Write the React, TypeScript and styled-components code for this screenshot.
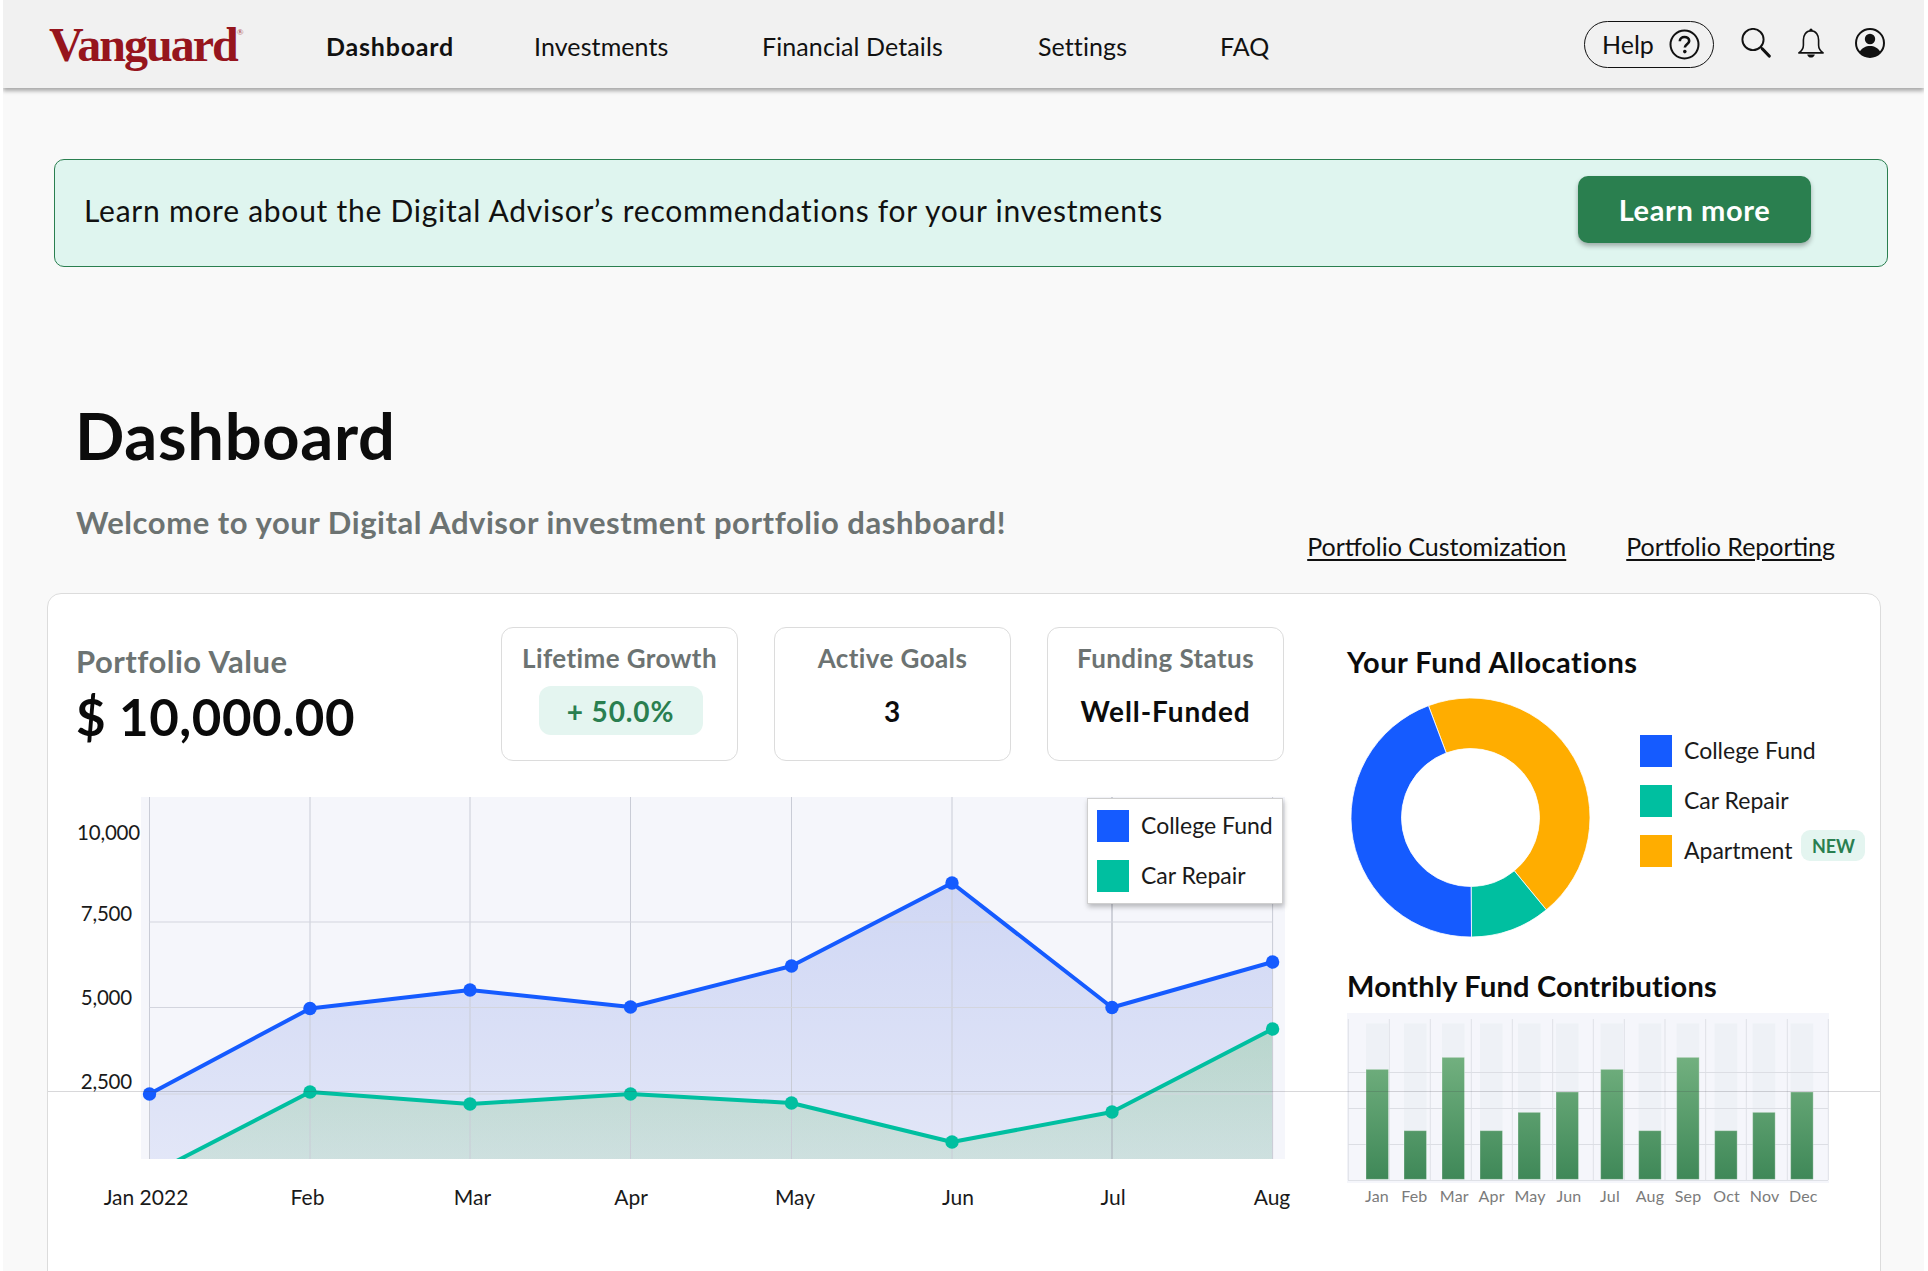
import React from 'react';
import styled, { createGlobalStyle } from 'styled-components';

const GlobalStyle = createGlobalStyle`
  html, body {
    margin: 0;
    background: #ffffff;
    font-family: Lato, "Open Sans", sans-serif;
    color: #111;
    overflow: hidden;
  }
  svg text {
    font-family: Lato, "Open Sans", sans-serif;
  }
`;

const Page = styled.div`
  margin: 0 4px 0 3px;
  height: 1271px;
  background: #f9f9f9;
  overflow: hidden;
`;

const Header = styled.header`
  display: flex;
  align-items: center;
  height: 88px;
  background: #f1f1f1;
  box-shadow: 0 3px 4px rgba(0, 0, 0, 0.32);
  padding: 0 39px 0 46px;
`;

const Logo = styled.div`
  width: 278px;
  font-family: "Liberation Serif", serif;
  font-weight: 700;
  font-size: 48px;
  line-height: 48px;
  letter-spacing: -2px;
  color: #96151d;
  margin-top: 1px;

  sup {
    font-size: 9px;
    letter-spacing: 0;
    vertical-align: 26px;
    line-height: 0;
    color: #b9666b;
  }
`;

const Nav = styled.nav`
  display: grid;
  grid-template-columns: 207px 228px 276px 182px auto;
  align-items: center;
  margin-top: 4px;
`;

const NavItem = styled.a<{ $active?: boolean }>`
  margin-left: ${(p) => (p.$active ? '-1px' : '0')};
  font-size: 25px;
  font-weight: ${(p) => (p.$active ? 700 : 400)};
  letter-spacing: ${(p) => (p.$active ? '0.8px' : '0.1px')};
  color: #111;
  text-decoration: none;
`;

const Actions = styled.div`
  display: flex;
  align-items: center;
  margin-left: auto;
`;

const HelpPill = styled.div`
  display: flex;
  align-items: center;
  justify-content: space-between;
  box-sizing: border-box;
  width: 130px;
  height: 47px;
  margin-top: 1px;
  padding: 0 13px 0 17px;
  border: 1px solid #111;
  border-radius: 24px;
  font-size: 25px;
`;

const HelpLabel = styled.span`
  margin-top: -2px;
`;

const IconSlot = styled.span<{ $gap: number }>`
  display: flex;
  margin-left: ${(p) => p.$gap}px;
  margin-top: -2px;
`;

const Banner = styled.section`
  display: flex;
  align-items: center;
  justify-content: space-between;
  box-sizing: border-box;
  height: 108px;
  margin: 71px 36px 0 51px;
  padding: 0 76px 0 29px;
  background: #dff5ef;
  border: 1px solid #2a7f50;
  border-radius: 10px;
`;

const BannerText = styled.span`
  margin-top: -7px;
  font-size: 30px;
  letter-spacing: 0.75px;
`;

const LearnButton = styled.button`
  width: 233px;
  height: 67px;
  margin-top: -7px;
  border: 0;
  border-radius: 10px;
  background: #2a7f4f;
  box-shadow: 0 3px 5px rgba(0, 0, 0, 0.3);
  color: #fff;
  font-family: inherit;
  font-size: 29px;
  font-weight: 700;
  letter-spacing: 0.6px;
`;

const Hero = styled.section`
  padding: 0 89px 0 73px;
`;

const Title = styled.h1`
  margin: 130px 0 0 -1px;
  font-size: 65px;
  line-height: 76px;
  font-weight: 700;
  letter-spacing: 0.7px;
  color: #0c0c0c;
`;

const SubRow = styled.div`
  display: flex;
  align-items: flex-start;
  justify-content: space-between;
  height: 60px;
  margin-top: 29px;
`;

const Welcome = styled.p`
  margin: 0;
  font-size: 31px;
  line-height: 40px;
  font-weight: 700;
  letter-spacing: 0.55px;
  color: #6c7372;
`;

const Links = styled.div`
  display: flex;
  gap: 60px;
  margin-top: 28px;
`;

const PageLink = styled.a`
  font-size: 25px;
  line-height: 32px;
  color: #111;
  text-decoration: underline;
  text-underline-offset: 3px;
`;

const Card = styled.section`
  position: relative;
  display: flex;
  box-sizing: border-box;
  height: 760px;
  margin: 31px 43px 0 44px;
  padding: 0 0 0 28px;
  background: #fff;
  border: 1px solid #dcdcdc;
  border-radius: 14px;
`;

const StrayRule = styled.div`
  position: absolute;
  left: 0;
  right: 0;
  top: 497px;
  height: 1px;
  background: rgba(60, 60, 70, 0.2);
  z-index: 3;
  pointer-events: none;
`;

const MainColumn = styled.div`
  flex: 0 0 1271px;
  padding-top: 33px;
`;

const TopRow = styled.div`
  display: flex;
  gap: 36px;
`;

const PortfolioBlock = styled.div`
  width: 389px;
  padding-top: 14px;
`;

const PortfolioLabel = styled.div`
  font-size: 31px;
  line-height: 40px;
  font-weight: 700;
  letter-spacing: 0.48px;
  color: #6c7372;
`;

const PortfolioValue = styled.div`
  margin-top: 6px;
  font-size: 51px;
  line-height: 60px;
  font-weight: 700;
  letter-spacing: 0.55px;
  color: #0a0a0a;
`;

const StatCard = styled.div`
  display: flex;
  flex-direction: column;
  align-items: center;
  box-sizing: border-box;
  width: 237px;
  height: 134px;
  padding-top: 14px;
  border: 1px solid #dcdcdc;
  border-radius: 12px;
`;

const StatLabel = styled.div`
  font-size: 26px;
  line-height: 32px;
  font-weight: 700;
  letter-spacing: 0.4px;
  color: #6c7372;
`;

const StatValue = styled.div<{ $pill?: boolean }>`
  display: flex;
  align-items: center;
  justify-content: center;
  box-sizing: border-box;
  width: ${(p) => (p.$pill ? '164px' : 'auto')};
  height: 49px;
  margin-top: 12px;
  margin-left: ${(p) => (p.$pill ? '2px' : '0')};
  border-radius: 12px;
  background: ${(p) => (p.$pill ? '#e4f5f0' : 'transparent')};
  color: ${(p) => (p.$pill ? '#2a7f50' : '#0c0c0c')};
  font-size: 28px;
  font-weight: 700;
  letter-spacing: 0.9px;
`;

const ChartArea = styled.div`
  position: relative;
  width: 1230px;
  height: 450px;
  margin-top: 19px;

  svg {
    display: block;
  }
`;

const ChartLegend = styled.div`
  position: absolute;
  left: 1011px;
  top: 18px;
  display: flex;
  flex-direction: column;
  gap: 18px;
  box-sizing: border-box;
  width: 196px;
  height: 106px;
  padding: 11px 0 0 9px;
  background: #fff;
  border: 1px solid #cfcfcf;
  box-shadow: 1px 3px 5px rgba(0, 0, 0, 0.25);
`;

const LegendRow = styled.div`
  display: flex;
  align-items: center;
  gap: 12px;
`;

const Swatch = styled.span<{ $color: string }>`
  flex: none;
  width: 32px;
  height: 32px;
  background: ${(p) => p.$color};
`;

const LegendText = styled.span`
  margin-top: -2px;
  font-size: 23px;
  line-height: 32px;
  color: #1a1a1a;
`;

const SideColumn = styled.aside`
  padding-top: 50px;
`;

const SideHeading = styled.h2`
  margin: 0;
  font-size: 29px;
  line-height: 36px;
  font-weight: 700;
  letter-spacing: 0.5px;
  color: #0c0c0c;
`;

const DonutRow = styled.div`
  display: flex;
  align-items: flex-start;
  margin: 18px 0 0 4px;
`;

const DonutSvg = styled.svg`
  flex: none;
`;

const DonutLegend = styled.div`
  display: flex;
  flex-direction: column;
  gap: 18px;
  margin: 37px 0 0 50px;
`;

const NewTag = styled.span`
  display: flex;
  align-items: center;
  justify-content: center;
  align-self: flex-start;
  width: 64px;
  height: 31px;
  margin: -5px 0 0 -3px;
  border-radius: 9px;
  background: #e4f5f0;
  color: #2a7f50;
  font-size: 18px;
  font-weight: 700;
`;

const BarHeading = styled(SideHeading)`
  margin-top: 31px;
  letter-spacing: 0.2px;
`;

const BarChart = styled.div`
  width: 482px;
  height: 200px;
  margin-top: 9px;

  svg {
    display: block;
  }
`;

const BLUE = '#155bff';
const TEAL = '#00bfa0';
const AMBER = '#ffad00';

const MONTH_X = [149.5, 310, 470, 630.5, 791.5, 952, 1112, 1272.6];
const BLUE_Y = [1094, 1008.5, 990, 1007, 966, 883, 1007.5, 962];
const TEAL_Y = [1175, 1092, 1104, 1094, 1103, 1142, 1112, 1029];

const Y_LABELS = [
  { text: '10,000', x: 140, y: 832 },
  { text: '7,500', x: 132, y: 913 },
  { text: '5,000', x: 132, y: 997 },
  { text: '2,500', x: 132, y: 1081 },
];

const X_LABELS = [
  { text: 'Jan 2022', x: 146 },
  { text: 'Feb', x: 307.5 },
  { text: 'Mar', x: 472.5 },
  { text: 'Apr', x: 631 },
  { text: 'May', x: 795 },
  { text: 'Jun', x: 958 },
  { text: 'Jul', x: 1113 },
  { text: 'Aug', x: 1272 },
];

const toPoints = (ys: number[]) => MONTH_X.map((x, i) => `${x},${ys[i]}`).join(' ');
const toArea = (ys: number[]) => `${toPoints(ys)} 1272.6,1159 149.5,1159`;

const LineChart = () => (
  <svg width="1230" height="450" viewBox="76 780 1230 450">
    <defs>
      <linearGradient id="blueFill" gradientUnits="userSpaceOnUse" x1="0" y1="883" x2="0" y2="1159">
        <stop offset="0" stopColor="#3a5bd9" stopOpacity="0.2" />
        <stop offset="1" stopColor="#3a5bd9" stopOpacity="0.1" />
      </linearGradient>
      <linearGradient id="tealFill" gradientUnits="userSpaceOnUse" x1="0" y1="1029" x2="0" y2="1159">
        <stop offset="0" stopColor="#4fb84a" stopOpacity="0.24" />
        <stop offset="1" stopColor="#4fb84a" stopOpacity="0.14" />
      </linearGradient>
      <clipPath id="plotClip">
        <rect x="141" y="797" width="1144" height="362" />
      </clipPath>
    </defs>
    <rect x="141" y="797" width="1144" height="362" fill="#f5f6fb" />
    <g clipPath="url(#plotClip)">
      <polygon points={toArea(BLUE_Y)} fill="url(#blueFill)" />
      <polygon points={toArea(TEAL_Y)} fill="url(#tealFill)" />
      {MONTH_X.map((x, i) => (
        <line key={x} x1={x} x2={x} y1="797" y2="1159" stroke={i === 6 ? '#a9adb8' : '#c9ccd6'} strokeWidth="1" />
      ))}
      {[922, 1007.5, 1094].map((y) => (
        <line key={y} x1="149.5" x2="1272.6" y1={y} y2={y} stroke="#d3d5de" strokeWidth="1" />
      ))}
      <polyline points={toPoints(BLUE_Y)} fill="none" stroke={BLUE} strokeWidth="4" strokeLinejoin="round" />
      <polyline points={toPoints(TEAL_Y)} fill="none" stroke={TEAL} strokeWidth="4" strokeLinejoin="round" />
    </g>
    {MONTH_X.map((x, i) => (
      <circle key={x} cx={x} cy={BLUE_Y[i]} r="6.7" fill={BLUE} />
    ))}
    {MONTH_X.slice(1).map((x, i) => (
      <circle key={x} cx={x} cy={TEAL_Y[i + 1]} r="6.7" fill={TEAL} />
    ))}
    {Y_LABELS.map((l) => (
      <text key={l.text} x={l.x} y={l.y + 7.5} textAnchor="end" fontSize="20.5" letterSpacing="-0.2" fill="#1a1a1a">
        {l.text}
      </text>
    ))}
    {X_LABELS.map((l) => (
      <text key={l.text} x={l.x} y="1205" textAnchor="middle" fontSize="21" fill="#1a1a1a">
        {l.text}
      </text>
    ))}
  </svg>
);

// arc between two clockwise angles (degrees from 12 o'clock)
const slicePath = (from: number, to: number) => {
  const R = 119.5;
  const r = 69;
  const pt = (rad: number, a: number) => {
    const t = (a * Math.PI) / 180;
    return `${(119.5 + rad * Math.sin(t)).toFixed(2)} ${(119.5 - rad * Math.cos(t)).toFixed(2)}`;
  };
  const large = to - from > 180 ? 1 : 0;
  return `M${pt(R, from)} A${R} ${R} 0 ${large} 1 ${pt(R, to)} L${pt(r, to)} A${r} ${r} 0 ${large} 0 ${pt(r, from)} Z`;
};

const Donut = () => (
  <DonutSvg width="239" height="239" viewBox="0 0 239 239">
    <path d={slicePath(-20.6, 140.6)} fill={AMBER} stroke="#fff" strokeWidth="0.8" />
    <path d={slicePath(140.6, 179.5)} fill={TEAL} stroke="#fff" strokeWidth="0.8" />
    <path d={slicePath(179.5, 339.4)} fill={BLUE} stroke="#fff" strokeWidth="0.8" />
  </DonutSvg>
);

// x, top and c were read off a 3x crop starting at (1330, 960)
const BARS = [
  { m: 'Jan', x: 108, top: 328, c: 141 },
  { m: 'Feb', x: 222, top: 512, c: 253 },
  { m: 'Mar', x: 336, top: 292, c: 373 },
  { m: 'Apr', x: 450, top: 512, c: 485 },
  { m: 'May', x: 564, top: 457, c: 600 },
  { m: 'Jun', x: 678, top: 396, c: 717 },
  { m: 'Jul', x: 812, top: 328, c: 840 },
  { m: 'Aug', x: 926, top: 512, c: 960 },
  { m: 'Sep', x: 1040, top: 292, c: 1074 },
  { m: 'Oct', x: 1154, top: 512, c: 1190 },
  { m: 'Nov', x: 1268, top: 457, c: 1304 },
  { m: 'Dec', x: 1382, top: 396, c: 1420 },
];

const BAR_GRID_X = [55, 178, 301, 424, 547, 668, 790, 883, 1005, 1127, 1249, 1372, 1495];

const Bars = () => (
  <svg width="482" height="200" viewBox="1347 1013 482 200">
    <defs>
      <linearGradient id="barFill" gradientUnits="userSpaceOnUse" x1="0" y1="1057" x2="0" y2="1179">
        <stop offset="0" stopColor="#72b07f" />
        <stop offset="1" stopColor="#3f8858" />
      </linearGradient>
    </defs>
    <rect x="1347" y="1013" width="482" height="170" fill="#f5f6fb" />
    {BARS.map((b) => (
      <rect key={b.m} x={1330 + b.x / 3} y="1023.5" width="22.5" height="156" fill="#eef1f6" />
    ))}
    {BAR_GRID_X.map((x) => (
      <line key={x} x1={1330 + x / 3} x2={1330 + x / 3} y1="1019" y2="1180" stroke="#dfe1e7" strokeWidth="1" />
    ))}
    {[1072.5, 1108.5, 1144.5].map((y) => (
      <line key={y} x1="1348" x2="1828" y1={y} y2={y} stroke="#dcdee4" strokeWidth="1" />
    ))}
    <line x1="1348" x2="1828" y1="1180.5" y2="1180.5" stroke="#dfe1e7" strokeWidth="1" />
    {BARS.map((b) => (
      <rect
        key={b.m}
        x={1330 + b.x / 3}
        y={960 + b.top / 3}
        width="22.5"
        height={(658 - b.top) / 3}
        fill="url(#barFill)"
        stroke="#ffffff"
        strokeOpacity="0.3"
      />
    ))}
    {BARS.map((b) => (
      <text key={b.m} x={1330 + b.c / 3} y="1201.5" textAnchor="middle" fontSize="16" fill="#7b7b7b" letterSpacing="0.2">
        {b.m}
      </text>
    ))}
  </svg>
);

const HelpIcon = () => (
  <svg width="31" height="31" viewBox="0 0 31 31" fill="none">
    <circle cx="15.5" cy="15.5" r="14" stroke="#111" strokeWidth="2" />
    <path d="M10.8 12.2c0-2.6 2.1-4.2 4.7-4.2s4.7 1.5 4.7 3.9c0 3.3-4.4 3.4-4.4 6.7" stroke="#111" strokeWidth="2.6" />
    <circle cx="15.8" cy="22.6" r="1.8" fill="#111" />
  </svg>
);

const SearchIcon = () => (
  <svg width="30" height="30" viewBox="0 0 30 30" fill="none">
    <circle cx="12" cy="11.5" r="10.6" stroke="#111" strokeWidth="1.9" />
    <path d="M19.6 19.2l2 2" stroke="#111" strokeWidth="1.9" />
    <path d="M21.5 21l6.7 7" stroke="#111" strokeWidth="3.2" strokeLinecap="round" />
  </svg>
);

const BellIcon = () => (
  <svg width="26" height="30" viewBox="0 0 26 30" fill="none">
    <circle cx="13" cy="2" r="1.6" fill="#111" />
    <path
      d="M13 2.8C7.7 2.8 5.4 7.4 5.4 12v5.2C5.4 20.8 3.4 23 .9 24.9h24.2c-2.5-1.9-4.5-4.1-4.5-7.7V12c0-4.6-2.3-9.2-7.6-9.2Z"
      stroke="#111"
      strokeWidth="1.6"
      strokeLinejoin="round"
    />
    <path d="M9.2 26.4h7.6c-.4 2-1.9 3.2-3.8 3.2s-3.4-1.2-3.8-3.2Z" fill="#111" />
  </svg>
);

const UserIcon = () => (
  <svg width="30" height="30" viewBox="0 0 30 30" fill="none">
    <circle cx="15" cy="15" r="14" stroke="#111" strokeWidth="2" />
    <circle cx="15" cy="11" r="5.2" fill="#111" />
    <path d="M4.6 24c2.4-4.2 6.2-6 10.4-6s8 1.8 10.4 6c-2.4 3.3-6.2 5-10.4 5s-8-1.7-10.4-5Z" fill="#111" />
  </svg>
);

const App = () => (
  <Page>
    <GlobalStyle />
    <Header>
      <Logo>
        Vanguard<sup>®</sup>
      </Logo>
      <Nav>
        <NavItem $active>Dashboard</NavItem>
        <NavItem>Investments</NavItem>
        <NavItem>Financial Details</NavItem>
        <NavItem>Settings</NavItem>
        <NavItem>FAQ</NavItem>
      </Nav>
      <Actions>
        <HelpPill>
          <HelpLabel>Help</HelpLabel>
          <HelpIcon />
        </HelpPill>
        <IconSlot $gap={27}>
          <SearchIcon />
        </IconSlot>
        <IconSlot $gap={27}>
          <BellIcon />
        </IconSlot>
        <IconSlot $gap={31}>
          <UserIcon />
        </IconSlot>
      </Actions>
    </Header>

    <Banner>
      <BannerText>Learn more about the Digital Advisor’s recommendations for your investments</BannerText>
      <LearnButton>Learn more</LearnButton>
    </Banner>

    <Hero>
      <Title>Dashboard</Title>
      <SubRow>
        <Welcome>Welcome to your Digital Advisor investment portfolio dashboard!</Welcome>
        <Links>
          <PageLink>Portfolio Customization</PageLink>
          <PageLink>Portfolio Reporting</PageLink>
        </Links>
      </SubRow>
    </Hero>

    <Card>
      <StrayRule />
      <MainColumn>
        <TopRow>
          <PortfolioBlock>
            <PortfolioLabel>Portfolio Value</PortfolioLabel>
            <PortfolioValue>$ 10,000.00</PortfolioValue>
          </PortfolioBlock>
          <StatCard>
            <StatLabel>Lifetime Growth</StatLabel>
            <StatValue $pill>+ 50.0%</StatValue>
          </StatCard>
          <StatCard>
            <StatLabel>Active Goals</StatLabel>
            <StatValue>3</StatValue>
          </StatCard>
          <StatCard>
            <StatLabel>Funding Status</StatLabel>
            <StatValue>Well-Funded</StatValue>
          </StatCard>
        </TopRow>
        <ChartArea>
          <LineChart />
          <ChartLegend>
            <LegendRow>
              <Swatch $color={BLUE} />
              <LegendText>College Fund</LegendText>
            </LegendRow>
            <LegendRow>
              <Swatch $color={TEAL} />
              <LegendText>Car Repair</LegendText>
            </LegendRow>
          </ChartLegend>
        </ChartArea>
      </MainColumn>
      <SideColumn>
        <SideHeading>Your Fund Allocations</SideHeading>
        <DonutRow>
          <Donut />
          <DonutLegend>
            <LegendRow>
              <Swatch $color={BLUE} />
              <LegendText>College Fund</LegendText>
            </LegendRow>
            <LegendRow>
              <Swatch $color={TEAL} />
              <LegendText>Car Repair</LegendText>
            </LegendRow>
            <LegendRow>
              <Swatch $color={AMBER} />
              <LegendText>Apartment</LegendText>
              <NewTag>NEW</NewTag>
            </LegendRow>
          </DonutLegend>
        </DonutRow>
        <BarHeading>Monthly Fund Contributions</BarHeading>
        <BarChart>
          <Bars />
        </BarChart>
      </SideColumn>
    </Card>
  </Page>
);

export default App;
